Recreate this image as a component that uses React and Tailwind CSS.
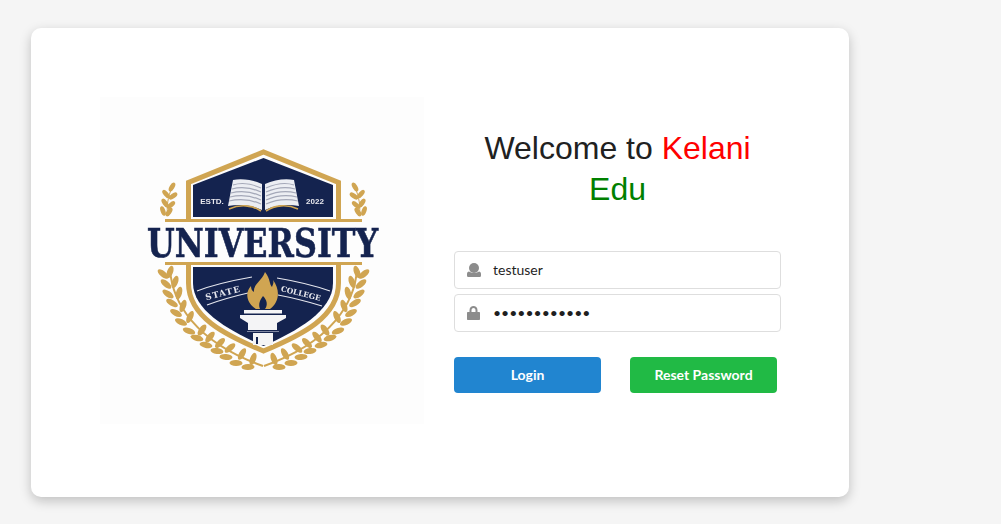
const GOLD = '#d0a552';
const NAVY = '#14234f';

// outer and inner leaves of the left half of the wreath: x, y, angle
const wreathLeaves = [
  [63, 177, 40], [66, 187, 40], [68, 197, 35], [72, 206, 30], [76, 216, 28], [81, 225, 25],
  [89, 234, 20], [97, 241, 15], [106, 248, 12], [117, 254, 8], [126, 260, 5], [136, 266, 2], [148, 270, -2],
  [70, 175, -70], [75, 185, -70], [79, 196, -75], [83, 209, -70], [90, 220, -65], [102, 233, -55],
  [110, 240, -50], [120, 246, -45], [130, 251, -40], [142, 257, -60], [153, 262, -70],
];

const sprigLeaves = [
  [72, 90, -60], [66, 97, 50], [73, 99, -35], [65, 106, 55], [71, 108, -40], [63, 114, 70], [69, 115, -55],
];

const Leaf = ({ x, y, angle, rx = 6.5, ry = 3 }) => (
  <ellipse cx={x} cy={y} rx={rx} ry={ry} fill={GOLD} transform={`rotate(${angle} ${x} ${y})`} />
);

const Laurels = () => (
  <g>
    {wreathLeaves.map(([x, y, a], i) => (
      <Leaf key={i} x={x} y={y} angle={a} />
    ))}
    <path d="M70 172 C72 205 95 245 163 269" fill="none" stroke={GOLD} strokeWidth="2" />
    {sprigLeaves.map(([x, y, a], i) => (
      <Leaf key={i} x={x} y={y} angle={a} rx={5} ry={2.4} />
    ))}
    <path d="M72 90 C68 100 66 110 68 119" fill="none" stroke={GOLD} strokeWidth="1" />
  </g>
);

const BookPage = () => (
  <g>
    <path d="M133 83 C142 81 153 83 162 87 V113 C152 108 140 107 128 109 Z" fill="#eceef3" />
    {[88, 92, 96, 100, 104].map((y) => (
      <path key={y} d={`M${133 - (y - 88) / 4} ${y} C142 ${y - 3} 152 ${y - 1} 161 ${y + 3}`} fill="none" stroke="#a4a8b8" strokeWidth="1.2" />
    ))}
    <path d="M129 112 C140 107 152 108 161 114" fill="none" stroke={GOLD} strokeWidth="1.6" />
  </g>
);

const Logo = () => (
  <svg viewBox="0 0 324 327" className="h-[327px] w-[324px] bg-[#fdfdfd] blur-[0.4px]">
    <Laurels />
    <g transform="matrix(-1 0 0 1 327 0)">
      <Laurels />
    </g>

    {/* upper house */}
    <path d="M88.5 123 V85.5 L163.5 55 L238.5 85.5 V123" fill="none" stroke={GOLD} strokeWidth="5" />
    <path d="M93 120 V88 L163.5 61 L233 88 V120 Z" fill={NAVY} />
    <BookPage />
    <g transform="matrix(-1 0 0 1 327 0)">
      <BookPage />
    </g>
    <text x="112" y="107" textAnchor="middle" fontFamily="'Liberation Sans', sans-serif" fontWeight="700" fontSize="8" fill="#e8e8ee">
      ESTD.
    </text>
    <text x="215" y="107" textAnchor="middle" fontFamily="'Liberation Sans', sans-serif" fontWeight="700" fontSize="8" fill="#e8e8ee">
      2022
    </text>

    {/* bars and name */}
    <rect x="65" y="122" width="197" height="3" fill={GOLD} />
    <rect x="65" y="165" width="197" height="3" fill={GOLD} />
    <text
      transform="matrix(0.795 0 0 1 47 160)"
      fontFamily="'DejaVu Serif', serif"
      fontWeight="700"
      fontSize="40"
      stroke={NAVY}
      strokeWidth="0.6"
      fill={NAVY}
    >
      UNIVERSITY
    </text>

    {/* lower shield */}
    <path d="M88.5 167 V186 C88.5 220 125 238 163.5 254 C202 238 238.5 220 238.5 186 V167" fill="none" stroke={GOLD} strokeWidth="5" />
    <path d="M93 170 H233 V186 C233 214 197 234 163.5 249 C130 234 93 214 93 186 Z" fill={NAVY} />

    {/* ribbons */}
    <g fill="none" stroke="#e6e7ee" strokeWidth="1.2">
      <path d="M97 194 C115 187 135 183 152 180" />
      <path d="M107 208 C120 203 135 199 148 196" />
      <path d="M177 181 C195 184 213 188 230 194" />
      <path d="M178 198 C194 201 209 205 222 209" />
    </g>
    <text x="123" y="199" textAnchor="middle" transform="rotate(-14 123 196)" fontFamily="'DejaVu Serif', serif" fontWeight="700" fontSize="8.5" letterSpacing="1" fill="#e6e7ee">
      STATE
    </text>
    <text x="201" y="199" textAnchor="middle" transform="rotate(14 201 196)" fontFamily="'DejaVu Serif', serif" fontWeight="700" fontSize="7.5" fill="#e6e7ee">
      COLLEGE
    </text>

    {/* flame */}
    <path d="M165 175 C171 183 169 187 172 190 C173 187 174 186 173 183 C180 192 180 205 170 212 H156 C146 206 145 195 151 189 C151 192 152 194 154 195 C153 187 162 184 165 175 Z" fill={GOLD} />
    <path d="M163 199 C167 203 168 208 165 212 H160 C158 207 160 203 163 199 Z" fill={NAVY} />

    {/* torch */}
    <rect x="144" y="213" width="38" height="3.5" fill="#f4f4f6" />
    <path d="M140 218 H186 V221 L177 226 V233 H148 V226 L140 221 Z" fill="#f4f4f6" />
    <rect x="147" y="234" width="32" height="1" fill="#8088a4" />
    <rect x="153" y="236" width="20" height="12" fill="#f4f4f6" />
    <rect x="156" y="240" width="2" height="7" fill={NAVY} />
  </svg>
);

const UserIcon = () => (
  <svg viewBox="0 0 14 14" className="h-3.5 w-3.5" fill="currentColor">
    <circle cx="7" cy="5" r="5" />
    <path d="M2 8.6 C4 10.4 10 10.4 12 8.6 C13.2 8.8 14 9.8 14 11 V12.4 C14 13.3 13.3 14 12.4 14 H1.6 C0.7 14 0 13.3 0 12.4 V11 C0 9.8 0.8 8.8 2 8.6 Z" />
  </svg>
);

const LockIcon = () => (
  <svg viewBox="0 0 13 14" className="h-3.5 w-[13px]" fill="currentColor">
    <path d="M2.5 6 V4.2 C2.5 -1.4 10.5 -1.4 10.5 4.2 V6 H12 C12.6 6 13 6.4 13 7 V13 C13 13.6 12.6 14 12 14 H1 C0.4 14 0 13.6 0 13 V7 C0 6.4 0.4 6 1 6 Z M4.5 6 H8.5 V4.2 C8.5 1.2 4.5 1.2 4.5 4.2 Z" fillRule="evenodd" />
  </svg>
);

const Field = ({ icon, type, value }) => (
  <div className="relative">
    <span className="absolute left-[13px] top-0 flex h-full items-center text-[#8c8c8c]">{icon}</span>
    <input
      readOnly
      type={type}
      value={value}
      className="h-[38px] w-full rounded border border-[#dedede] bg-white pb-0.5 pl-[38px] pr-3 text-sm text-[#1f1f1f] outline-none"
    />
  </div>
);

export default function App() {
  return (
    <div className="min-h-screen bg-[#f5f5f5] pl-[31px] pt-[28px] font-['Lato',sans-serif]">
      <div className="flex h-[469px] w-[818px] items-start rounded-[10px] bg-white pl-[69px] pt-[69px] shadow-[0_4px_12px_rgba(0,0,0,0.22)]">
        <Logo />
        <div className="ml-[30px] w-[327px] pt-[31px]">
          <h1 className="text-center font-['Liberation_Sans',sans-serif] text-[32px] font-normal leading-[41px] text-[#212121]">
            Welcome to <span className="text-[#ff0000]">Kelani</span> <span className="text-[#008000]">Edu</span>
          </h1>
          <div className="mt-[41px] flex flex-col gap-[5px]">
            <Field icon={<UserIcon />} type="text" value="testuser" />
            <Field icon={<LockIcon />} type="password" value="testuser1234" />
          </div>
          <div className="mt-[25px] flex gap-[29px]">
            <button className="h-9 w-[147px] rounded bg-[#2185d0] text-sm font-bold text-white">Login</button>
            <button className="h-9 w-[147px] rounded bg-[#21ba45] text-sm font-bold text-white">Reset Password</button>
          </div>
        </div>
      </div>
    </div>
  );
}
